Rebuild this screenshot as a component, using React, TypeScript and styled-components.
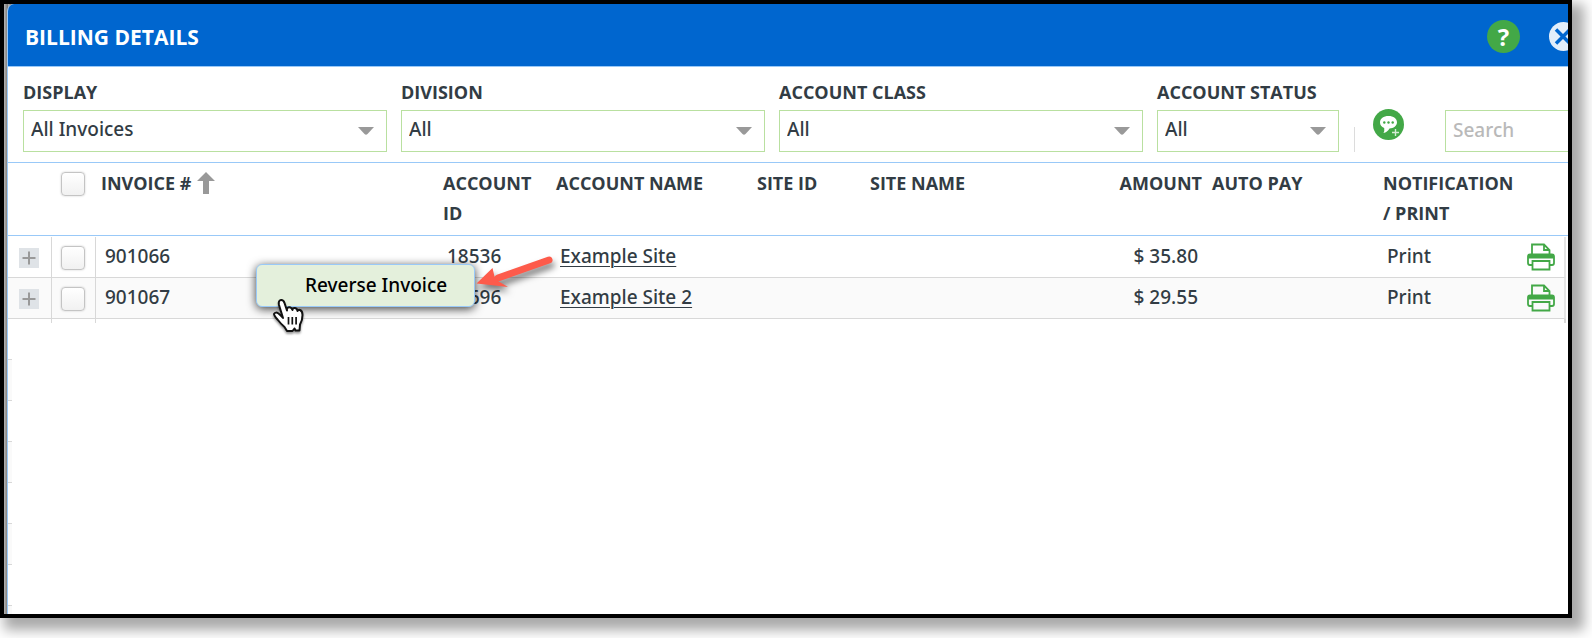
import React from "react";
import styled, { createGlobalStyle } from "styled-components";

const ink = "#323c44";
const blue = "#0066cf";
const paleBlue = "#99c9f8";
const green = "#43a847";
const rule = "#d8d8d8";

const GlobalStyle = createGlobalStyle`
  *, *::before, *::after { box-sizing: border-box; }
  body {
    margin: 0;
    background: #fff;
    color: ${ink};
    font-family: "Noto Sans", "Open Sans", sans-serif;
    font-size: 19px;
    font-weight: 500;
  }
`;

const Frame = styled.main`
  position: relative;
  display: flex;
  min-height: calc(100vh - 20px);
  margin: 0 20px 20px 0;
  border: 4px solid #000;
  background: linear-gradient(90deg, #b4b4b4, #77736f);
  background-size: 4px 100%;
  box-shadow: 8px 8px 12px 4px rgba(0, 0, 0, 0.34);
`;

const Dialog = styled.section`
  display: flex;
  flex: 1;
  flex-direction: column;
  min-width: 0;
  margin-left: 3px;
  overflow: hidden;
  border-left: 1px solid ${paleBlue};
  border-radius: 7px 0 0 0;
  background: #fff;
`;

const TitleBar = styled.header`
  display: flex;
  align-items: center;
  height: 63px;
  margin-left: -1px;
  padding: 2px 0 0 18px;
  border-bottom: 1px solid ${paleBlue};
  background: ${blue};
`;

const Title = styled.h1`
  flex: 1;
  margin: 0;
  padding-top: 2px;
  color: #fff;
  font: 680 21px/30px "Open Sans", sans-serif;
`;

const IconButton = styled.button`
  flex: none;
  display: flex;
  padding: 0;
  border: 0;
  background: none;
  cursor: pointer;
`;

const HelpButton = styled(IconButton)`
  align-items: center;
  justify-content: center;
  width: 33px;
  height: 33px;
  margin-right: 29px;
  border-radius: 50%;
  background: ${green};
  color: #fff;
  font: 700 24px "Open Sans", sans-serif;
`;

const CloseButton = styled(IconButton)`
  margin-right: -10px;
`;

const Filters = styled.form`
  display: flex;
  align-items: flex-end;
  height: 96px;
  padding: 0 0 10px 15px;
  border-bottom: 1px solid ${paleBlue};
`;

const Fields = styled.div`
  display: grid;
  flex: 1;
  grid-template-columns: 2fr 2fr 2fr 1fr;
  gap: 14px;
`;

const Field = styled.label`
  display: flex;
  flex-direction: column;
  gap: 5px;
  font: 680 18px/26px "Open Sans", sans-serif;
`;

const SelectBox = styled.span`
  position: relative;
  display: block;

  svg {
    position: absolute;
    top: 17px;
    right: 13px;
    pointer-events: none;
  }
`;

const Select = styled.select`
  display: block;
  width: 100%;
  height: 42px;
  padding: 0 30px 4px 7px;
  border: 1px solid #b9e0a0;
  border-radius: 0;
  appearance: none;
  background: #fff;
  color: ${ink};
  font: 500 19px "Noto Sans", sans-serif;
`;

const Tools = styled.div`
  display: flex;
  flex: none;
  align-items: flex-end;
  width: 229px;
  height: 42px;
`;

const Divider = styled.span`
  flex: none;
  width: 1px;
  height: 25px;
  margin-left: 15px;
  background: #dcdcdc;
`;

const NoteButton = styled(IconButton)`
  align-self: flex-start;
  margin: -1px 41px 0 18px;
`;

const Search = styled.input`
  flex: none;
  width: 200px;
  height: 42px;
  padding: 0 7px 3px;
  border: 1px solid #b9e0a0;
  border-radius: 0;
  color: ${ink};
  font: 500 19px "Noto Sans", sans-serif;

  &::placeholder { color: #b9b9b9; opacity: 1; }
`;

const Table = styled.table`
  width: 100%;
  table-layout: fixed;
  border-collapse: separate;
  border-spacing: 0;
`;

const Col = styled.col<{ $w?: number }>`
  width: ${(p) => (p.$w ? `${p.$w}px` : "auto")};
`;

const Th = styled.th<{ $right?: boolean }>`
  height: 73px;
  padding: 5px 5px 7px;
  border-bottom: 1px solid ${paleBlue};
  font: 680 18px/30px "Open Sans", sans-serif;
  text-align: ${(p) => (p.$right ? "right" : "left")};
  vertical-align: top;
`;

const SortLabel = styled.span`
  display: flex;
  align-items: center;
  gap: 6px;
`;

const ToggleTh = styled(Th)`
  padding: 9px 2px 0 0;
`;

const GapTd = styled.td`
  height: 1px;
  padding: 0;
`;

const Td = styled.td<{ $right?: boolean }>`
  height: 41px;
  padding: 0 9px 2px;
  border-bottom: 1px solid ${rule};
  text-align: ${(p) => (p.$right ? "right" : "left")};
  white-space: nowrap;
`;

const ToggleTd = styled(Td)`
  padding: 1px 1px 0 0;
  border-right: 1px solid ${rule};
`;

const PrintTd = styled(Td)`
  padding: 0 0 0 13px;
  border-right: 2px solid #e4e4e4;
`;

const EdgeTd = styled.td`
  padding: 0;
  background: #fff;
`;

const Row = styled.tr`
  &:nth-child(even) { background: #fafafa; }
`;

const TailTd = styled.td<{ $edge?: number }>`
  height: 4px;
  padding: 0;
  border-right: ${(p) => p.$edge ?? 0}px solid ${rule};
`;

const Check = styled.input`
  display: block;
  width: 24px;
  height: 24px;
  margin: 0 auto;
  border: 1px solid #c4c4c4;
  border-radius: 4px;
  appearance: none;
  background: linear-gradient(#fff, #f1f1f1);
  box-shadow: 0 0 2px rgba(0, 0, 0, 0.22);
`;

const Expand = styled(IconButton)`
  width: 20px;
  height: 20px;
  margin: 0 0 0 11px;
  background: #dfe3e7;
`;

const SiteLink = styled.a`
  color: inherit;
  text-decoration: underline;
  text-decoration-thickness: 1px;
  text-underline-offset: 3px;
`;

const Gutter = styled.div`
  flex: 1;
  width: 4px;
  margin-top: -4px;
  background: repeating-linear-gradient(
    #fff 0 40px, ${rule} 40px 41px, #fafafa 41px 81px, ${rule} 81px 82px
  );
`;

const Menu = styled.div`
  position: absolute;
  top: 260px;
  left: 252px;
  width: 219px;
  border: 1px solid ${paleBlue};
  border-radius: 6px;
  background: #e4f0dc;
  box-shadow: 0 2px 10px rgba(0, 0, 0, 0.75);
`;

const MenuItem = styled.button`
  display: block;
  width: 100%;
  height: 41px;
  padding: 0 0 2px 48px;
  border: 0;
  background: none;
  color: #000;
  font: 500 19px "Noto Sans", sans-serif;
  text-align: left;
`;

const Arrow = styled.svg`
  position: absolute;
  top: 248px;
  left: 464px;
  filter: drop-shadow(2px 5px 3px rgba(0, 0, 0, 0.5));
`;

const Pointer = styled.svg`
  position: absolute;
  top: 292px;
  left: 267px;
  filter: drop-shadow(0 2px 1px rgba(0, 0, 0, 0.4));
`;

const Caret = () => (
  <svg width="16" height="8" viewBox="0 0 16 8" aria-hidden="true">
    <path d="M0 0H16L9.5 7Q8 8.4 6.5 7Z" fill="#999" />
  </svg>
);

const Printer = () => (
  <svg width="28" height="28" viewBox="0 0 28 28" fill="none" stroke={green} strokeWidth="1.8" aria-hidden="true">
    <path d="M5 11.500V1.500H17L22.500 7V11.500M17 1.500V7H22.500" />
    <path d="M5 22H3Q1 22 1 20V13.500Q1 11.500 3 11.500H25Q27 11.500 27 13.500V20Q27 22 25 22H23" />
    <path d="M2 12H26V14.500H2Z" fill={green} />
    <path d="M5.500 18H22.500V26.500H5.500Z" />
  </svg>
);

interface SelectFieldProps {
  label: string;
  value: string;
}

const SelectField = ({ label, value }: SelectFieldProps) => (
  <Field>
    {label}
    <SelectBox>
      <Select defaultValue={value}>
        <option>{value}</option>
      </Select>
      <Caret />
    </SelectBox>
  </Field>
);

const filters: SelectFieldProps[] = [
  { label: "DISPLAY", value: "All Invoices" },
  { label: "DIVISION", value: "All" },
  { label: "ACCOUNT CLASS", value: "All" },
  { label: "ACCOUNT STATUS", value: "All" },
];

const invoices = [
  { number: "901066", account: "18536", name: "Example Site", amount: "$ 35.80" },
  { number: "901067", account: "18696", name: "Example Site 2", amount: "$ 29.55" },
];

export default function App() {
  return (
    <>
      <GlobalStyle />
      <Frame>
        <Dialog>
          <TitleBar>
            <Title>BILLING DETAILS</Title>
            <HelpButton aria-label="Help">?</HelpButton>
            <CloseButton aria-label="Close">
              <svg width="29" height="29" viewBox="0 0 29 29">
                <circle cx="14.500" cy="14.500" r="14.500" fill="#e3eefa" />
                <path d="M7 7.500L21 21.500M21 7.500L7 21.500" stroke={blue} strokeWidth="3.500" />
              </svg>
            </CloseButton>
          </TitleBar>

          <Filters>
            <Fields>
              {filters.map((f) => (
                <SelectField key={f.label} {...f} />
              ))}
            </Fields>
            <Tools>
              <Divider />
              <NoteButton type="button" aria-label="Add note">
                <svg width="31" height="31" viewBox="0 0 31 31">
                  <circle cx="15.500" cy="15.500" r="15.500" fill={green} />
                  <path d="M15.500 7C20.500 7 24 9.700 24 13.300S20.500 19.500 16.500 19.500C15 22 13 23.500 10.500 24Q11.700 21.500 11.200 19C8.500 18 7 16 7 13.300C7 9.700 10.500 7 15.500 7Z" fill="#fff" />
                  <g fill={green}>
                    <circle cx="11.300" cy="13.500" r="1.200" />
                    <circle cx="15.500" cy="13.500" r="1.200" />
                    <circle cx="19.700" cy="13.500" r="1.200" />
                  </g>
                  <path d="M22.500 19V27M18.500 23H26.500" stroke={green} strokeWidth="4" />
                  <path d="M22.500 20V27M19 23.500H26" stroke="#d5ecd5" strokeWidth="1.400" />
                </svg>
              </NoteButton>
              <Search type="search" placeholder="Search" aria-label="Search" />
            </Tools>
          </Filters>

          <Table>
            <colgroup>
              <Col $w={44} />
              <Col $w={44} />
              <Col />
              <Col $w={113} />
              <Col $w={201} />
              <Col $w={113} />
              <Col $w={228} />
              <Col $w={114} />
              <Col $w={171} />
              <Col $w={136} />
              <Col $w={52} />
              <Col $w={2} />
            </colgroup>
            <thead>
              <tr>
                <Th />
                <ToggleTh><Check type="checkbox" aria-label="Select all invoices" /></ToggleTh>
                <Th>
                  <SortLabel>
                    INVOICE #
                    <svg width="18" height="22" viewBox="0 0 18 22" aria-hidden="true">
                      <path d="M9 0L18 9H12V22H6V9H0Z" fill="#999" />
                    </svg>
                  </SortLabel>
                </Th>
                <Th>ACCOUNT ID</Th>
                <Th>ACCOUNT NAME</Th>
                <Th>SITE ID</Th>
                <Th>SITE NAME</Th>
                <Th $right>AMOUNT</Th>
                <Th>AUTO PAY</Th>
                <Th>NOTIFICATION / PRINT</Th>
                <Th colSpan={2} />
              </tr>
              <tr aria-hidden="true">
                <GapTd colSpan={12} />
              </tr>
            </thead>
            <tbody>
              {invoices.map((inv) => (
                <Row key={inv.number}>
                  <ToggleTd>
                    <Expand aria-label={`Expand invoice ${inv.number}`}>
                      <svg width="20" height="20" viewBox="0 0 20 20">
                        <path d="M10 3.500V16.500M3.500 10H16.500" stroke="#999" strokeWidth="2" />
                      </svg>
                    </Expand>
                  </ToggleTd>
                  <ToggleTd><Check type="checkbox" aria-label={`Select invoice ${inv.number}`} /></ToggleTd>
                  <Td>{inv.number}</Td>
                  <Td>{inv.account}</Td>
                  <Td><SiteLink href="#site">{inv.name}</SiteLink></Td>
                  <Td />
                  <Td />
                  <Td $right>{inv.amount}</Td>
                  <Td />
                  <Td>Print</Td>
                  <PrintTd>
                    <IconButton aria-label={`Print invoice ${inv.number}`}><Printer /></IconButton>
                  </PrintTd>
                  <EdgeTd />
                </Row>
              ))}
            </tbody>
            <tfoot>
              <tr>
                <TailTd $edge={1} />
                <TailTd $edge={1} />
                <TailTd colSpan={9} $edge={2} />
                <TailTd />
              </tr>
            </tfoot>
          </Table>
          <Gutter />
        </Dialog>

        <Menu role="menu">
          <MenuItem role="menuitem">Reverse Invoice</MenuItem>
        </Menu>

        <Arrow width="90" height="44" viewBox="0 0 90 44" aria-hidden="true">
          <path d="M81 8L30 26" stroke="#fd5b4b" strokeWidth="7" strokeLinecap="round" />
          <path d="M8.500 31.500L24.500 16L26.500 24.500L30 29L40 35Z" fill="#fd5b4b" />
        </Arrow>

        <Pointer width="36" height="40" viewBox="0 0 36 40" aria-hidden="true">
          <path
            d="M12 22V22L8 9Q7 4.500 10 4Q12.500 3.800 13.500 7L16 14.500Q15.500 11.500 18 11.200Q20.500 11 21.500 14Q21.500 11.800 24 12Q26.200 12.300 26.500 15Q27 13.500 29 14Q31.500 15 31.500 19Q31.500 24.500 29 28.500L28.500 34.500H24.500L23.500 32.500L21.500 35H16L13.500 31Q10 28 6.500 23.500Q3 19.500 3 18Q4.500 15.500 7.500 17.500Q10 19.500 12 22Z"
            fill="#fff" stroke="#111" strokeWidth="2" strokeLinejoin="round"
          />
          <path d="M17.500 21V28.500M21.300 21V28.500M25.100 21V28.500" stroke="#111" strokeWidth="1.700" />
        </Pointer>
      </Frame>
    </>
  );
}
